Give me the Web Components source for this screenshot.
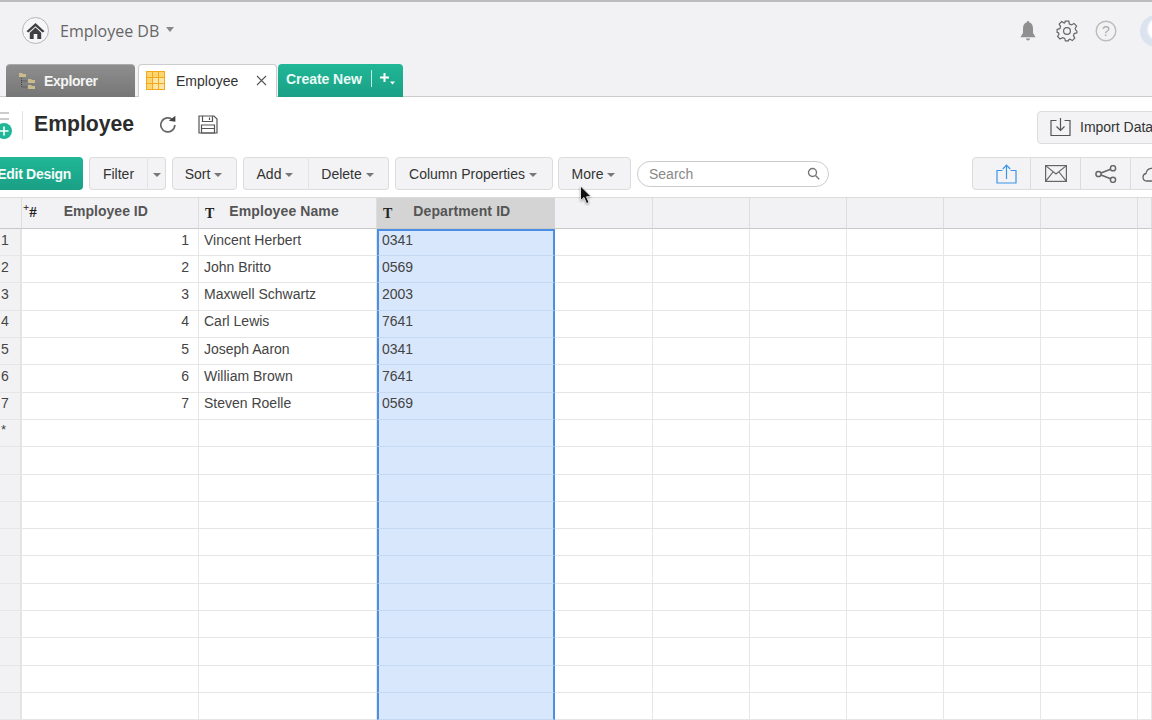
<!DOCTYPE html>
<html>
<head>
<meta charset="utf-8">
<title>Employee</title>
<style>
  html, body { margin: 0; padding: 0; width: 1152px; height: 720px; overflow: hidden; background: #fff; }
  body { font-family: "Liberation Sans", Arial, sans-serif; font-size: 14px; color: #333; }
  app-shell { position: relative; }
</style>
</head>
<body>
<app-shell>
  <app-header></app-header>
  <tab-strip></tab-strip>
  <title-bar></title-bar>
  <tool-bar>
    <tool-button primary style="width:91px">Edit Design</tool-button>
    <btn-group>
      <tool-button style="width:59px" joined="right">Filter</tool-button>
      <tool-button style="width:18px;padding-right:3px" joined="left" caret></tool-button>
    </btn-group>
    <tool-button style="width:65px" caret>Sort</tool-button>
    <btn-group>
      <tool-button style="width:66px" joined="right" caret>Add</tool-button>
      <tool-button style="width:80px" joined="left" caret>Delete</tool-button>
    </btn-group>
    <tool-button style="width:158px" caret>Column Properties</tool-button>
    <tool-button style="width:73px;margin-left:-1px" caret>More</tool-button>
    <search-box></search-box>
    <share-icons></share-icons>
  </tool-bar>
  <data-grid></data-grid>
  <mouse-cursor></mouse-cursor>
</app-shell>

<script>
// top area: home button, database name, right hand icons
class AppHeader extends HTMLElement {
  constructor() {
    super();
    this.attachShadow({ mode: "open" });
    this.shadowRoot.innerHTML = `
      <style>
      :host { display: flex; align-items: center; box-sizing: border-box; height: 64px; padding: 0 0 4px 22px; background: #f2f2f5; border-top: 2px solid #bdbdbd; }
      .home { width: 27px; height: 27px; box-sizing: border-box; border: 1.5px solid #b5b5b5; border-radius: 50%; display: flex; align-items: center; justify-content: center; background: #f6f6f8; }
      .name { margin-left: 11px; font: 16px "Open Sans", sans-serif; color: #666; }
      .caret { margin-left: 7px; margin-top: -3px; border: 4.5px solid transparent; border-top: 5px solid #888; border-bottom: 0; }
      .right { margin-left: auto; display: flex; align-items: center; gap: 17px; margin-right: -20px; }
      .bell { margin-right: 3px; }
      .avatar { width: 32px; height: 32px; border-radius: 50%; background: radial-gradient(circle at 60% 45%, #fff 0 10px, #dbe3ef 13px); margin-left: 6px; }
      svg { display: block; }
      </style>
      <div class="home">
        <svg width="19" height="18" viewBox="0 0 19 18"><path d="M9.5 1 L18.5 9.2 L16.6 10.6 L9.5 4.2 L2.4 10.6 L.5 9.2 Z M3.8 10.8 L9.5 5.6 L15.2 10.8 V17 H11.3 V12 H7.7 V17 H3.8 Z" fill="#404040"/></svg>
      </div>
      <span class="name">Employee DB</span>
      <span class="caret"></span>
      <div class="right">
        <svg class="bell" width="16" height="22" viewBox="0 0 16 22"><path d="M8 1 a1.4 1.4 0 0 1 1.4 1.5 C12 3.2 13 5.5 13 8.5 V13 L15.6 17.2 H.4 L3 13 V8.5 C3 5.5 4 3.2 6.6 2.5 A1.4 1.4 0 0 1 8 1 Z M6 18.4 H10 A2 2 0 0 1 6 18.4 Z" fill="#8f8f8f"/></svg>
        <svg width="22" height="22" viewBox="0 0 22 22" fill="none" stroke="#666" stroke-width="1.2"><path d="M9.2 1.2 H12.8 L13.4 4 L15.5 4.9 L18 3.4 L20.6 6 L19.1 8.5 L20 10.4 L20.9 11 V12.8 L18.2 13.6 L17.4 15.6 L18.8 18.2 L16.3 20.6 L13.8 19.1 L12.8 19.6 L12.4 20.9 H9.4 L8.7 18.4 L6.6 17.6 L4 19 L1.6 16.4 L3 14 L2.2 12.6 L1.1 12.3 V9.4 L3.8 8.7 L4.6 6.6 L3.2 4 L5.7 1.6 L8.2 3 L8.8 2.8 Z"/><circle cx="11" cy="11" r="3.4"/></svg>
        <svg width="22" height="22" viewBox="0 0 22 22"><circle cx="11" cy="11" r="9.8" fill="none" stroke="#bcbcbc" stroke-width="1.4"/><text x="11" y="16" text-anchor="middle" font-family="Liberation Sans" font-size="14" fill="#aaa">?</text></svg>
        <div class="avatar"></div>
      </div>`;
  }
}

class TabStrip extends HTMLElement {
  constructor() {
    super();
    this.attachShadow({ mode: "open" });
    this.shadowRoot.innerHTML = `
      <style>
      :host { display: flex; align-items: flex-end; box-sizing: border-box; height: 33px; padding-left: 6px; background: linear-gradient(#f2f2f5 0, #f2f2f5 32px, #ccc 32px); }
      .tab { box-sizing: border-box; height: 33px; display: flex; align-items: center; border-radius: 4px 4px 0 0; }
      .explorer { width: 129px; background: linear-gradient(#8e8e8e, #767676); padding-left: 12px; color: #f4f4f4; font-weight: bold; letter-spacing: -.4px; margin-right: 3px; border-top: 1px solid #aaa; }
      .explorer span { margin-left: 8px; }
      .active { width: 139px; background: #fff; border: 1px solid #ccc; border-bottom: 0; padding-left: 7px; color: #333; margin-right: 1px; }
      .active span { margin-left: 11px; }
      .close { margin-left: 18px; display: block; }
      .create { width: 125px; background: linear-gradient(#20b797, #1a9f85); color: #eafaf6; font-weight: bold; padding: 0 0 3px 8px; letter-spacing: -.05px; }
      .create i { width: 1px; height: 17px; background: #bfeee2; margin: 0 7px 0 9px; }
      svg { display: block; }
      </style>
      <div class="tab explorer">
        <svg width="18" height="18" viewBox="0 0 18 18" fill="#c9bb8c"><path d="M1 1 H4 L5 2 H8 V5 H1 Z M10 7 H13 L14 8 H17 V11 H10 Z M10 13 H13 L14 14 H17 V17 H10 Z"/><path d="M3.5 6 V15 H9 M3.5 9 H9" fill="none" stroke="#444" stroke-dasharray="1 1"/></svg>
        <span>Explorer</span>
      </div>
      <div class="tab active">
        <svg width="19" height="19" viewBox="0 0 19 19"><rect x=".5" y=".5" width="18" height="18" fill="#fdd56e" stroke="#f5a81c"/><rect x="7" y="7" width="11" height="11" fill="#fbe6a6"/><path d="M6.5 1 V18 M12.5 1 V18 M1 6.5 H18 M1 12.5 H18" stroke="#f5a81c" stroke-width="1"/></svg>
        <span>Employee</span>
        <svg class="close" width="11" height="11" viewBox="0 0 11 11"><path d="M1 1 L10 10 M10 1 L1 10" stroke="#555" stroke-width="1.1"/></svg>
      </div>
      <div class="tab create">
        <span>Create New</span><i></i>
        <svg width="17" height="14" viewBox="0 0 17 14"><path d="M5.5 1 V10 M1 5.5 H10" stroke="#fff" stroke-width="2"/><path d="M11 9.5 H16 L13.5 12.5 Z" fill="#fff"/></svg>
      </div>`;
  }
}

class TitleBar extends HTMLElement {
  constructor() {
    super();
    this.attachShadow({ mode: "open" });
    this.shadowRoot.innerHTML = `
      <style>
      :host { display: flex; align-items: flex-start; box-sizing: border-box; height: 60px; background: #fff; }
      .menu { width: 22px; height: 46px; margin-top: 14px; box-sizing: border-box; }
      .bars { width: 9px; height: 8px; margin-top: 1px; border-top: 2px solid #ccc; border-bottom: 2px solid #ccc; box-sizing: border-box; }
      .plus { width: 16px; height: 16px; margin: 3px 0 0 -4px; border-radius: 50%; background: #20b797; display: flex; align-items: center; justify-content: center; }
      .sep { width: 1px; height: 29px; margin-top: 14px; background: #e4e4e4; }
      h1 { margin: 13px 0 0 11px; font: bold 21.2px/28px "Liberation Sans", sans-serif; color: #2c2c2c; }
      .refresh { margin: 18px 0 0 25px; }
      .save { margin: 18px 0 0 21px; }
      .import { margin: 14px -16px 0 auto; box-sizing: border-box; width: 131px; height: 33px; display: flex; align-items: center; padding-left: 12px; background: #f3f3f5; border: 1px solid #ddd; border-radius: 4px; color: #333; font-size: 14px; }
      .import span { margin-left: 9px; }
      svg { display: block; }
      </style>
      <div class="menu">
        <div class="bars"></div>
        <div class="plus"><svg width="10" height="10" viewBox="0 0 10 10"><path d="M5 .5 V9.5 M.5 5 H9.5" stroke="#fff" stroke-width="1.6"/></svg></div>
      </div>
      <div class="sep"></div>
      <h1>Employee</h1>
      <svg class="refresh" width="18" height="18" viewBox="0 0 18 18"><path d="M13.8 5 A7 7 0 1 0 15.8 10" fill="none" stroke="#666" stroke-width="1.7"/><path d="M9.8 5.8 L16.4 .8 V6.8 Z" fill="#444"/></svg>
      <svg class="save" width="20" height="19" viewBox="0 0 20 19" fill="none" stroke="#555" stroke-width="1.2"><path d="M1 1 H16 L19 4 V18 H1 Z"/><path d="M4.5 1 V6.5 H14.5 V1 M11.5 2.5 V5" /><path d="M3.5 10 H16.5 V18 H3.5 Z M3.5 13.5 H16.5" /></svg>
      <div class="import">
        <svg width="21" height="20" viewBox="0 0 21 20" fill="none" stroke="#555" stroke-width="1.2"><path d="M6.5 3.5 H1 V18.5 H20 V3.5 H14.5"/><path d="M10.5 1 V13 M6.5 9.5 L10.5 13.5 L14.5 9.5"/></svg>
        <span>Import Data</span>
      </div>`;
  }
}

class ToolBar extends HTMLElement {
  constructor() {
    super();
    this.attachShadow({ mode: "open" });
    this.shadowRoot.innerHTML = `
      <style>
      :host { display: flex; align-items: center; gap: 6px; box-sizing: border-box; height: 40px; padding-bottom: 6px; margin-left: -8px; width: 1188px; background: #fff; }
      </style>
      <slot></slot>`;
  }
}

class BtnGroup extends HTMLElement {
  constructor() {
    super();
    this.attachShadow({ mode: "open" });
    this.shadowRoot.innerHTML = `<style>:host { display: flex; }</style><slot></slot>`;
  }
}

class ToolButton extends HTMLElement {
  constructor() {
    super();
    this.attachShadow({ mode: "open" });
    this.shadowRoot.innerHTML = `
      <style>
      :host { display: flex; align-items: center; justify-content: center; box-sizing: border-box; height: 33px; background: #f3f3f5; border: 1px solid #dcdcdc; border-radius: 4px; color: #333; font-size: 14px; white-space: nowrap; }
      :host([caret]) { padding-right: 2px; }
      :host([joined="right"]) { border-radius: 4px 0 0 4px; border-right: 1px solid #e4e4e4; }
      :host([joined="left"]) { border-radius: 0 4px 4px 0; border-left: 0; }
      :host([primary]) { background: linear-gradient(#20b797, #1a9f85); border: 0; color: #f2fbf8; font-weight: bold; letter-spacing: -.3px; justify-content: flex-end; padding-right: 12px; }
      .caret { display: none; margin-left: 4px; margin-top: 2px; border: 4.5px solid transparent; border-top: 4.5px solid #777; border-bottom: 0; }
      :host([caret]) .caret { display: block; }
      </style>
      <slot></slot><span class="caret"></span>`;
  }
}

class SearchBox extends HTMLElement {
  constructor() {
    super();
    this.attachShadow({ mode: "open" });
    this.shadowRoot.innerHTML = `
      <style>
      :host { display: flex; align-items: center; justify-content: space-between; box-sizing: border-box; width: 192px; height: 26px; padding: 0 8px 0 11px; background: #fff; border: 1px solid #ccc; border-radius: 13px; color: #888; font-size: 14px; }
      svg { display: block; }
      </style>
      <span>Search</span>
      <svg width="13" height="13" viewBox="0 0 13 13" fill="none" stroke="#777" stroke-width="1.4"><circle cx="5.5" cy="5.5" r="4"/><path d="M8.5 8.5 L12.2 12.2"/></svg>`;
  }
}

class ShareIcons extends HTMLElement {
  constructor() {
    super();
    this.attachShadow({ mode: "open" });
    this.shadowRoot.innerHTML = `
      <style>
      :host { display: flex; flex: none; height: 33px; margin-left: auto; background: #f3f3f5; border: 1px solid #dcdcdc; border-radius: 4px 0 0 4px; box-sizing: border-box; }
      div { width: 50px; flex: none; display: flex; align-items: center; justify-content: center; border-left: 1px solid #dcdcdc; box-sizing: border-box; }
      div:first-of-type { width: 57px; border-left: 0; padding-left: 9px; }
      div:last-of-type { width: 49px; justify-content: flex-start; padding-left: 11px; }
      svg { display: block; }
      </style>
      <div><svg width="21" height="20" viewBox="0 0 21 20" fill="none" stroke="#3d95ea" stroke-width="1.2"><path d="M6.5 6.5 H1 V19 H20 V6.5 H14.5"/><path d="M10.5 15 V1.5 M6.8 5 L10.5 1.2 L14.2 5"/></svg></div>
      <div><svg width="22" height="17" viewBox="0 0 22 17" fill="none" stroke="#666" stroke-width="1.2"><rect x=".6" y=".6" width="20.8" height="15.8"/><path d="M.6 .6 L11 9 L21.4 .6 M.6 16.4 L8 7 M21.4 16.4 L14 7"/></svg></div>
      <div><svg width="22" height="18" viewBox="0 0 22 18" fill="none" stroke="#666" stroke-width="1.5"><circle cx="3.5" cy="9" r="2.6"/><circle cx="18" cy="3.2" r="2.6"/><circle cx="18" cy="14.8" r="2.6"/><path d="M6 8 L15.6 4.2 M6 10 L15.6 13.8"/></svg></div>
      <div><svg width="22" height="18" viewBox="0 0 22 18" fill="none" stroke="#666" stroke-width="1.3"><path d="M6 16 H4.5 A3.8 3.8 0 0 1 4 8.5 A6 6 0 0 1 15.5 7 A4.6 4.6 0 0 1 16 16 H6"/></svg></div>`;
  }
}

const GRID_ROWS = [
  ["1", "Vincent Herbert", "0341"],
  ["2", "John Britto", "0569"],
  ["3", "Maxwell Schwartz", "2003"],
  ["4", "Carl Lewis", "7641"],
  ["5", "Joseph Aaron", "0341"],
  ["6", "William Brown", "7641"],
  ["7", "Steven Roelle", "0569"],
];

class DataGrid extends HTMLElement {
  constructor() {
    super();
    this.attachShadow({ mode: "open" });
    const tee = `<span class="tee">T</span>`;
    let html = `
      <style>
      :host { display: grid; grid-template-columns: 22px 177px 178px 178px 98px 97px 97px 97px 97px 97px 14px; grid-template-rows: 31px; grid-auto-rows: 27.3px; width: 1152px; height: 524px; overflow: hidden; border-top: 1px solid #dcdcdc; box-sizing: border-box; background: #fff; font-size: 14px; color: #444; }
      .cell { box-sizing: border-box; border-right: 1px solid #e6e6e6; border-bottom: 1px solid #e6e6e6; padding: 0 3px 4.8px 5px; display: flex; align-items: center; white-space: nowrap; overflow: hidden; min-width: 0; }
      .head { background: #f2f2f5; border-bottom: 1px solid #c8c8c8; border-right: 1px solid #ddd; font-weight: bold; color: #555; padding: 0 0 3px 6px; }
      .tee { font: bold 14px "Liberation Serif", serif; color: #222; margin-top: 6px; }
      .num { justify-content: flex-end; padding-right: 9px; }
      .rownum { background: #f2f2f5; padding: 0 0 4.8px 1px; border-right: 2px solid #e4e4e4; }
      .star { align-items: flex-start; padding-top: 2px; font-size: 13px; }
      .sel { background: #d8e7fb; border-left: 2px solid #4a8fe3; border-right: 2px solid #4a8fe3; border-bottom: 1px solid #c6d9f2; padding-left: 3px; }
      .sel.first { border-top: 2px solid #4a8fe3; padding-bottom: 6.8px; }
      .head.selhead { background: #d4d4d4; border-right: 0; }
      .idmark { display: flex; align-items: flex-start; font: bold 11px/10px "Liberation Serif", serif; color: #222; margin: 0 0 0 -5px; }
      .idmark b { font: bold 15px/18px "Liberation Serif", serif; margin-top: 1px; }
      </style>
      <div class="cell head"></div>
      <div class="cell head"><span class="idmark">+<b>#</b></span><span style="margin-left:27px">Employee ID</span></div>
      <div class="cell head">${tee}<span style="margin-left:15px;letter-spacing:.1px">Employee Name</span></div>
      <div class="cell head selhead">${tee}<span style="margin-left:21px;letter-spacing:.1px">Department ID</span></div>`;
    for (let c = 0; c < 7; c++) html += `<div class="cell head"></div>`;
    for (let r = 0; r < 18; r++) {
      const row = GRID_ROWS[r];
      const label = row ? row[0] : r === 7 ? "*" : "";
      html += `<div class="cell rownum${r === 7 ? " star" : ""}">${label}</div>`;
      html += `<div class="cell num">${row ? row[0] : ""}</div>`;
      html += `<div class="cell">${row ? row[1] : ""}</div>`;
      html += `<div class="cell sel${r === 0 ? " first" : ""}">${row ? row[2] : ""}</div>`;
      for (let c = 0; c < 7; c++) html += `<div class="cell"></div>`;
    }
    this.shadowRoot.innerHTML = html;
  }
}

class MouseCursor extends HTMLElement {
  constructor() {
    super();
    this.attachShadow({ mode: "open" });
    this.shadowRoot.innerHTML = `
      <style>
      :host { position: absolute; left: 579px; top: 185px; display: block; }
      svg { display: block; filter: drop-shadow(0 1px 1px rgba(0,0,0,.35)); }
      </style>
      <svg width="14" height="20" viewBox="0 0 14 20"><path d="M1.5 1 V15.5 L5 12.5 L7.5 18.5 L10 17.5 L7.5 11.8 L12 11.5 Z" fill="#111" stroke="#fff" stroke-width=".8"/></svg>`;
  }
}

class AppShell extends HTMLElement {
  constructor() {
    super();
    this.attachShadow({ mode: "open" });
    this.shadowRoot.innerHTML = `
      <style>:host { display: flex; flex-direction: column; width: 1152px; height: 720px; overflow: hidden; }</style>
      <slot></slot>`;
  }
}

customElements.define("app-shell", AppShell);
customElements.define("app-header", AppHeader);
customElements.define("tab-strip", TabStrip);
customElements.define("title-bar", TitleBar);
customElements.define("tool-bar", ToolBar);
customElements.define("btn-group", BtnGroup);
customElements.define("tool-button", ToolButton);
customElements.define("search-box", SearchBox);
customElements.define("share-icons", ShareIcons);
customElements.define("data-grid", DataGrid);
customElements.define("mouse-cursor", MouseCursor);
</script>
</body>
</html>
